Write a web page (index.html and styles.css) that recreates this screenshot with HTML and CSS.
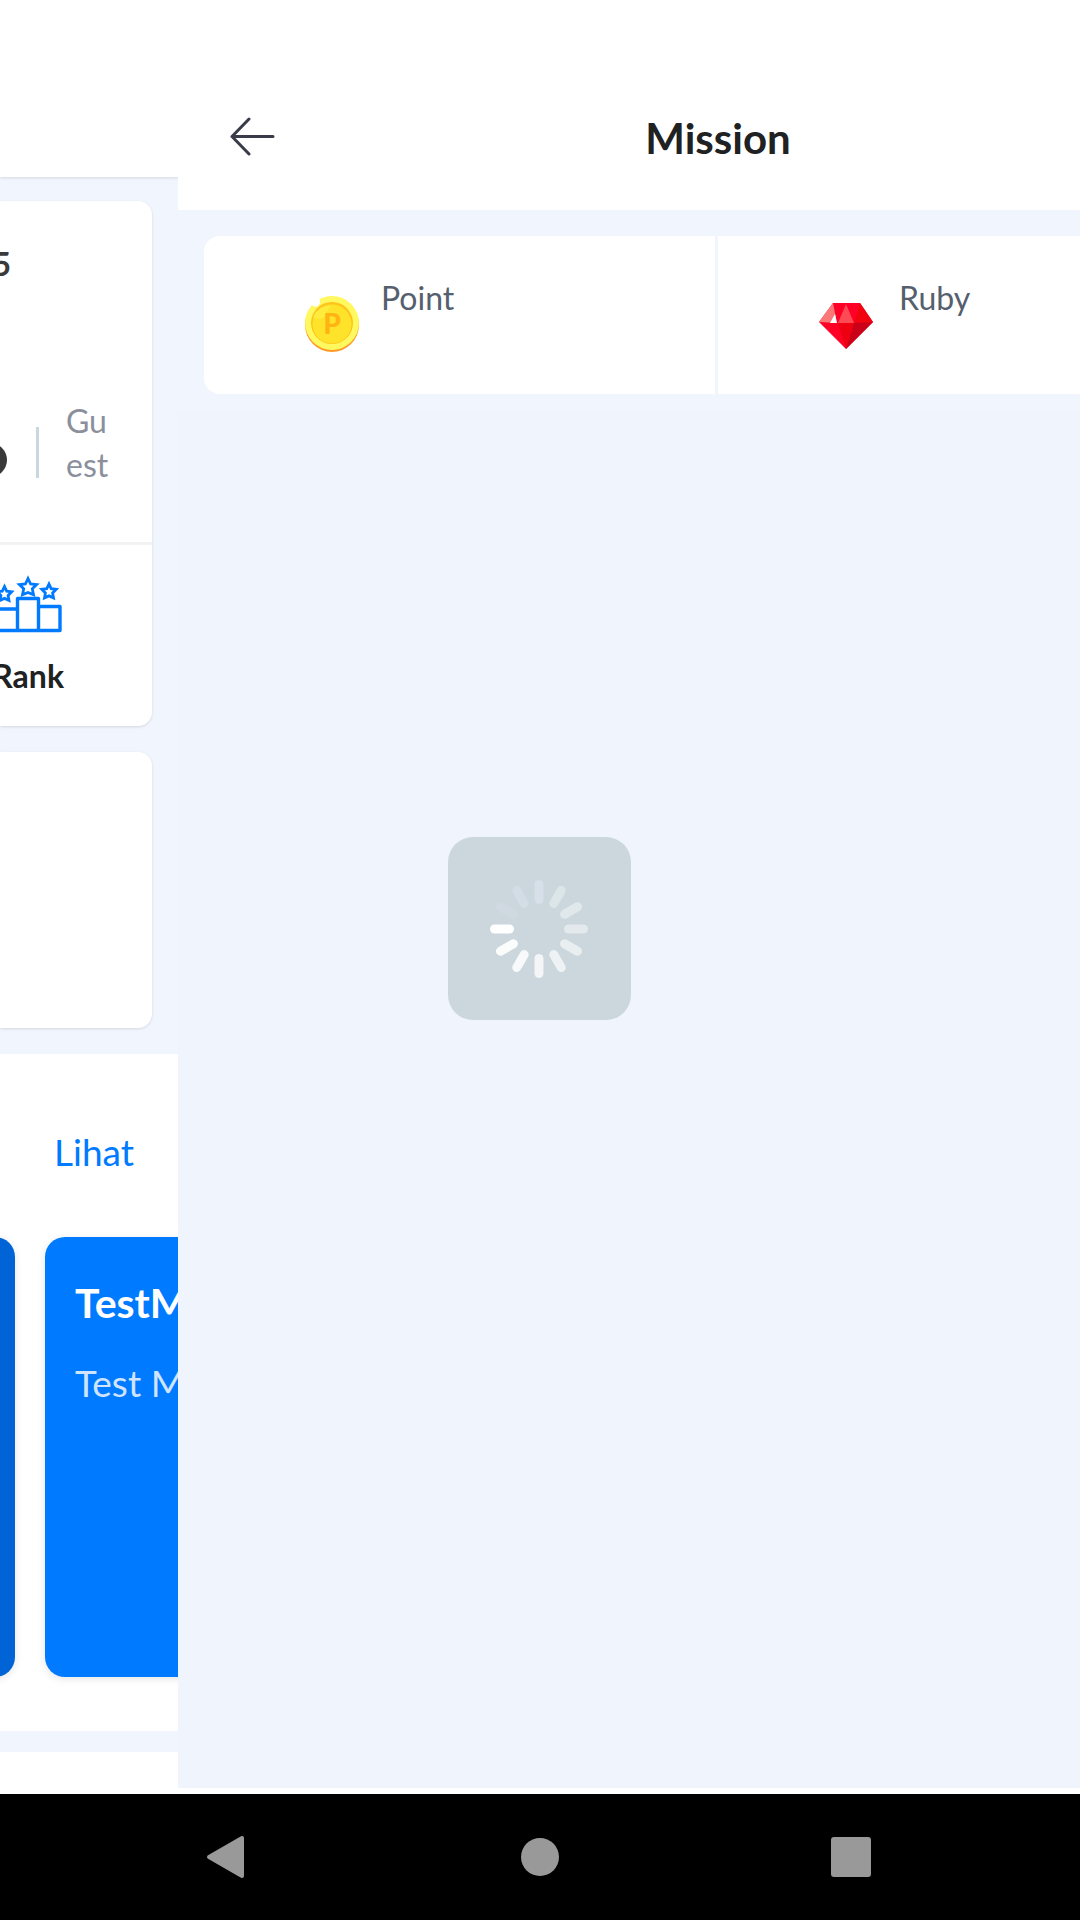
FILE: index.html
```html
<!DOCTYPE html>
<html lang="id">
<head>
<meta charset="utf-8">
<meta name="viewport" content="width=device-width, initial-scale=1">
<title>Mission</title>
<link rel="stylesheet" href="styles.css">
</head>
<body>
<div class="stage">
  <section class="home">
    <div class="home-top"></div>
    <div class="home-cards">
      <div class="card">
        <div class="profile">
          <strong class="profile-code">5</strong>
          <div class="member">
            <span class="member-dot"></span>
            <span class="member-rule"></span>
            <span class="member-name">Guest</span>
          </div>
        </div>
        <a class="rank" href="#rank">
          <svg class="rank-icon" width="84" height="58" viewBox="0 0 84 58" fill="none" stroke="#007aff" stroke-linejoin="round">
            <g stroke-width="3.400">
              <path d="M39.500 55.500V23.500H60.500V55.500M39.500 34H17V55.500H82V31.500H61"/>
            </g>
            <g stroke-width="2.800" stroke-linejoin="miter">
              <path d="M50 3.500l2.600 5.500 6 .6-4.300 4.200 1.200 6-5.500-2.300-5.500 2.300 1.200-6-4.300-4.200 6-.6z"/>
              <path d="M71 9l2.200 4.600 5 .7-3.600 3.600.9 5-4.500-2-4.500 2 .9-5-3.600-3.600 5-.7z"/>
              <path d="M26.500 11.500l2.200 4.600 5 .7-3.600 3.600.9 5-4.500-2-4.500 2 .9-5-3.600-3.600 5-.7z"/>
            </g>
          </svg>
          <span>Rank</span>
        </a>
      </div>
      <div class="card card-blank"></div>
    </div>
    <div class="missions">
      <a class="see-all" href="#missions">Lihat</a>
      <div class="carousel">
        <article class="tile tile-dark"></article>
        <article class="tile">
          <h2>TestM</h2>
          <p>Test M</p>
        </article>
      </div>
    </div>
    <div class="home-rest"></div>
  </section>

  <main class="mission">
    <header class="mission-bar">
      <button class="back" type="button" aria-label="Back">
        <svg width="48" height="42" viewBox="0 0 48 42" fill="none" stroke="#393b49" stroke-width="3" stroke-linecap="round" stroke-linejoin="round"><path d="M21 3L4 20.500L21 38M4 20.500H45"/></svg>
      </button>
      <h1>Mission</h1>
    </header>
    <div class="balances">
      <div class="balance">
        <svg width="54" height="56" viewBox="0 0 54 56">
          <circle cx="27" cy="29" r="27" fill="#ff9a28"/>
          <circle cx="27" cy="27" r="27" fill="#fff85e"/>
          <circle cx="27" cy="27" r="21" fill="#ffc31b"/>
          <circle cx="27" cy="28" r="19.500" fill="#ffe32b"/>
          <path d="M8 21A20 20 0 0 1 26 9L19 21Q14 25 8 21Z" fill="#ffeb3d"/>
          <path d="M6 8L12 1L15 4Q16 9 11 11Q8 11 6 8Z" fill="#fff"/>
          <text x="27" y="38" text-anchor="middle" class="coin-letter">P</text>
        </svg>
        <span>Point</span>
      </div>
      <div class="balance">
        <svg width="58" height="56" viewBox="0 0 58 56">
          <path d="M14 7H41L54 26L27 53L0 26Z" fill="#ff0026"/>
          <path d="M14 7L18 27L0 26Z" fill="#fb7878"/>
          <path d="M16 18L18 27H11Z" fill="#fff"/>
          <path d="M27 8L35 27H19Z" fill="#ff4a55"/>
          <path d="M41 7L54 26L35 27Z" fill="#f20310"/>
          <path d="M19 27H35L27 53Z" fill="#ee0010"/>
          <path d="M35 27L54 26L27 53Z" fill="#c90018"/>
        </svg>
        <span>Ruby</span>
      </div>
    </div>
    <div class="mission-list"></div>
  </main>

  <div class="loading" role="status" aria-label="Loading">
    <div class="loading-box">
      <svg width="100" height="100" viewBox="-50 -50 100 100" stroke-width="9" stroke-linecap="round">
        <path d="M0 -29.500V-44.500" stroke="#d7dfe8"/>
        <path d="M0 -29.500V-44.500" stroke="#dce5e8" transform="rotate(30)"/>
        <path d="M0 -29.500V-44.500" stroke="#e1e8ec" transform="rotate(60)"/>
        <path d="M0 -29.500V-44.500" stroke="#e4e9ed" transform="rotate(90)"/>
        <path d="M0 -29.500V-44.500" stroke="#e9eef0" transform="rotate(120)"/>
        <path d="M0 -29.500V-44.500" stroke="#eef2f4" transform="rotate(150)"/>
        <path d="M0 -29.500V-44.500" stroke="#f3f5f7" transform="rotate(180)"/>
        <path d="M0 -29.500V-44.500" stroke="#f7f9fa" transform="rotate(210)"/>
        <path d="M0 -29.500V-44.500" stroke="#fbfcfc" transform="rotate(240)"/>
        <path d="M0 -29.500V-44.500" stroke="#fff" transform="rotate(270)"/>
        <path d="M0 -29.500V-44.500" stroke="#d0d9e1" transform="rotate(300)"/>
        <path d="M0 -29.500V-44.500" stroke="#d4dce5" transform="rotate(330)"/>
      </svg>
    </div>
  </div>
</div>

<nav class="system-nav" aria-label="System">
  <button type="button" aria-label="Back"><svg width="48" height="48" viewBox="0 0 48 48"><path d="M4 24L37 5V43Z" fill="#999" stroke="#999" stroke-width="4" stroke-linejoin="round"/></svg></button>
  <button type="button" aria-label="Home"><svg width="48" height="48" viewBox="0 0 48 48"><circle cx="24" cy="24" r="19" fill="#999"/></svg></button>
  <button type="button" aria-label="Recents"><svg width="48" height="48" viewBox="0 0 48 48"><rect x="4" y="4" width="40" height="40" rx="3" fill="#999"/></svg></button>
</nav>
</body>
</html>
```
FILE: styles.css
```css
* {
  box-sizing: border-box;
}

body {
  margin: 0;
  min-height: 100vh;
  display: flex;
  flex-direction: column;
  background: #fff;
  color: #202122;
  font-family: Lato, "Noto Sans", sans-serif;
  font-size: 32px;
  line-height: 44px;
}

h1,
h2,
p {
  margin: 0;
}

a {
  color: inherit;
  text-decoration: none;
}

button {
  padding: 0;
  border: 0;
  background: none;
}

svg {
  display: block;
  flex: none;
}

.stage {
  position: relative;
  flex: 1;
  display: flex;
  overflow: hidden;
}

/* Home screen, sliding out to the left */
.home {
  flex: 0 0 178px;
  display: flex;
  flex-direction: column;
  overflow: hidden;
  background: #f1f6fe;
}

.home-top {
  height: 177px;
  background: #fff;
  box-shadow: 0 1px 3px rgba(0, 0, 0, 0.12);
}

.home-cards {
  display: flex;
  flex-direction: column;
  gap: 26px;
  padding: 24px 26px 26px 0;
}

.card {
  background: #fff;
  border-radius: 0 14px 14px 0;
  box-shadow: 0 1px 3px rgba(0, 0, 0, 0.12);
}

.card-blank {
  height: 276px;
}

.profile {
  height: 344px;
  padding-top: 41px;
  border-bottom: 3px solid #f2f3f5;
}

.profile-code {
  display: block;
  width: 11px;
  direction: rtl;
  color: #3a3a3a;
}

.member {
  display: flex;
  align-items: center;
  margin-top: 113px;
}

.member-dot {
  width: 34px;
  height: 34px;
  margin: 34px 29px 0 -27px;
  border-radius: 50%;
  background: #3a3a3a;
}

.member-rule {
  width: 3px;
  height: 51px;
  margin: 18px 27px 0 0;
  background: #cbd7df;
}

.member-name {
  width: 50px;
  color: #8b8f9c;
  word-break: break-all;
}

.rank {
  display: flex;
  flex-direction: column;
  align-items: flex-end;
  width: 64px;
  height: 181px;
  padding-top: 30px;
  font-weight: 700;
}

.rank-icon {
  margin: 0 2px 21px 0;
}

.missions {
  padding: 74px 0 54px;
  background: #fff;
}

.see-all {
  display: block;
  padding-left: 54px;
  color: #007aff;
  font-size: 37px;
  line-height: 48px;
}

.carousel {
  display: flex;
  gap: 30px;
  margin-top: 61px;
}

.tile {
  flex: 0 0 460px;
  height: 440px;
  padding: 42px 30px;
  border-radius: 20px;
  background: #007aff;
  box-shadow: 0 2px 8px rgba(0, 0, 0, 0.1);
  color: #fff;
}

.tile-dark {
  margin-left: -445px;
  background: #0064d6;
}

.tile h2 {
  font-size: 41px;
  line-height: 48px;
}

.tile p {
  margin-top: 32px;
  color: #cfe4ff;
  font-size: 37px;
  line-height: 48px;
}

.home-rest {
  flex: 1;
  margin-top: 21px;
  background: #fff;
}

/* Mission screen, as wide as the window */
.mission {
  flex: 0 0 100%;
  display: flex;
  flex-direction: column;
  padding-bottom: 6px;
}

.mission-bar {
  display: grid;
  grid-template-columns: 1fr auto 1fr;
  align-items: center;
  height: 210px;
  padding: 63px 50px 0;
}

.mission-bar h1 {
  padding-top: 3px;
  font-size: 42px;
  line-height: 48px;
}

.back {
  justify-self: start;
}

.balances {
  display: grid;
  grid-template-columns: 1fr 1fr;
  gap: 3px;
  padding: 26px 29px 17px 26px;
  background: #f1f6fe;
}

.balance {
  display: flex;
  gap: 22px;
  height: 158px;
  padding: 40px 101px 0;
  background: #fff;
  color: #555f6e;
}

.balance:first-child {
  border-radius: 16px 0 0 16px;
}

.balance:last-child {
  border-radius: 0 16px 16px 0;
}

.balance svg {
  margin-top: 20px;
}

.coin-letter {
  fill: #ffb414;
  font-size: 28px;
  font-weight: 900;
}

.mission-list {
  flex: 1;
  background: #eff4fd;
}

/* Loading indicator over both screens, below the status area */
.loading {
  position: absolute;
  inset: 63px 0 0;
  display: grid;
  place-items: center;
  padding-right: 2px;
}

.loading-box {
  display: grid;
  place-items: center;
  width: 183px;
  height: 183px;
  border-radius: 25px;
  background: #cbd7dd;
}

.system-nav {
  display: grid;
  grid-template-columns: repeat(3, 1fr);
  place-items: center;
  height: 126px;
  padding: 0 73px;
  background: #000;
}
```
